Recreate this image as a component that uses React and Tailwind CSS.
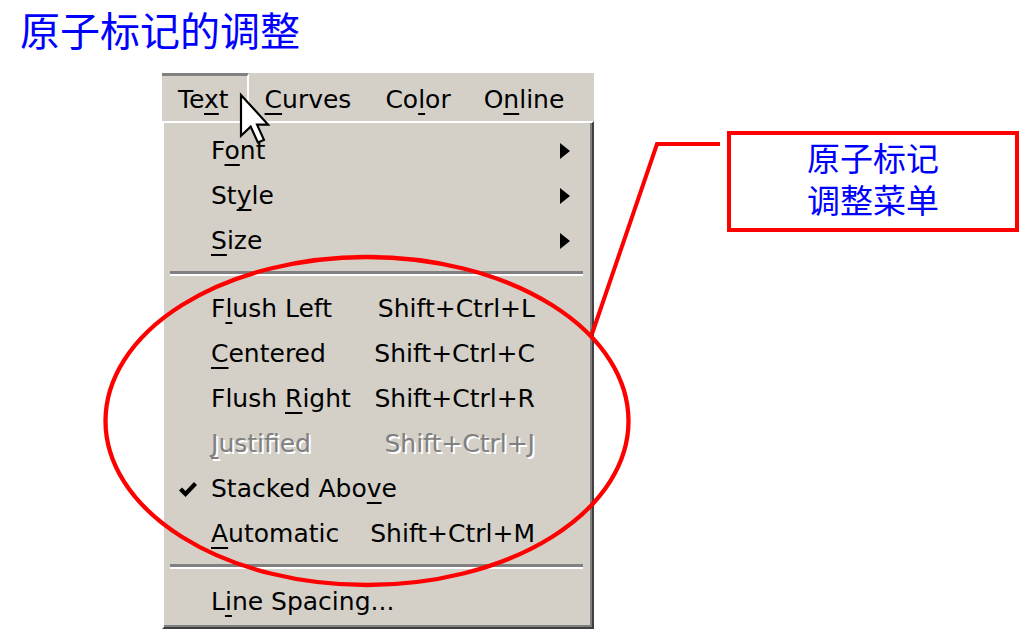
const menuFont = "font-['DejaVu_Sans',sans-serif]";

function U({ children }) {
  return <span className="underline decoration-2 underline-offset-[5px]">{children}</span>;
}

function Arrow() {
  return (
    <svg width="10" height="16" viewBox="0 0 10 16">
      <path d="M0 0 L10 8 L0 16 Z" fill="#000" />
    </svg>
  );
}

function Check() {
  return (
    <svg width="20" height="16" viewBox="0 0 20 16">
      <path d="M2.5 8 L7.5 13 L17.5 2.5" fill="none" stroke="#000" strokeWidth="4.2" />
    </svg>
  );
}

function Item({ label, shortcut, arrow, check, disabled }) {
  const tone = disabled ? "text-[#808080] [text-shadow:2px_2px_0_#ffffff]" : "text-black";
  return (
    <div className={`flex h-[45px] items-center leading-[45px] ${tone}`}>
      <div className="flex w-[47px] justify-center">{check && <Check />}</div>
      <div className="flex-1 whitespace-nowrap">{label}</div>
      {shortcut && <div className="whitespace-nowrap">{shortcut}</div>}
      <div className="flex w-[57px] pl-[25px]">{arrow && <Arrow />}</div>
    </div>
  );
}

function Separator() {
  return (
    <div className="h-[23px] pl-[6px] pr-[9px] pt-[8px]">
      <div className="h-[3px] bg-[#808080]" />
      <div className="h-[2px] bg-white" />
    </div>
  );
}

function TextMenu() {
  return (
    <div className={`ml-[162px] mt-[24px] w-[432px] text-[25px] ${menuFont}`}>
      <div className="flex h-[48px] bg-[#d4d0c8]">
        <div className="border-t-[3px] border-r-2 border-t-[#808080] border-r-white pl-4 pr-[18px] pt-[2px] leading-[43px]">
          Te<U>x</U>t
        </div>
        <div className="pl-4 pr-[18px] pt-[5px] leading-[43px]">
          <U>C</U>urves
        </div>
        <div className="pl-4 pr-[17px] pt-[5px] leading-[43px]">
          Co<U>l</U>or
        </div>
        <div className="px-4 pt-[5px] leading-[43px]">
          O<U>n</U>line
        </div>
      </div>
      <div className="border-2 border-t-white border-l-white border-r-[#404040] border-b-[#404040] bg-[#d4d0c8] pb-[3px] pt-[5px] shadow-[inset_-2px_-2px_0_#808080]">
        <Item label={<>F<U>o</U>nt</>} arrow />
        <Item label={<>St<U>y</U>le</>} arrow />
        <Item label={<><U>S</U>ize</>} arrow />
        <Separator />
        <Item label={<>F<U>l</U>ush Left</>} shortcut="Shift+Ctrl+L" />
        <Item label={<><U>C</U>entered</>} shortcut="Shift+Ctrl+C" />
        <Item label={<>Flush <U>R</U>ight</>} shortcut="Shift+Ctrl+R" />
        <Item label={<><U>J</U>ustified</>} shortcut="Shift+Ctrl+J" disabled />
        <Item label={<>Stacked Abo<U>v</U>e</>} check />
        <Item label={<><U>A</U>utomatic</>} shortcut="Shift+Ctrl+M" />
        <Separator />
        <Item label={<>L<U>i</U>ne Spacing...</>} />
      </div>
    </div>
  );
}

export default function App() {
  return (
    <div className="relative h-[643px] w-[1024px] overflow-hidden bg-white">
      <h1 className="pl-[20px] pt-[9px] text-[40px] font-normal leading-[40px] text-[#0000ff] font-['Noto_Sans_CJK_SC',sans-serif]">
        原子标记的调整
      </h1>
      <div className="flex items-start">
        <TextMenu />
        <div className="ml-[133px] mt-[82px] h-[101px] w-[292px] border-4 border-[#ff0000] pt-px text-center text-[33px] leading-[42px] text-[#0000ff] font-['Noto_Sans_CJK_SC',sans-serif]">
          <div>原子标记</div>
          <div>调整菜单</div>
        </div>
      </div>
      <svg className="pointer-events-none absolute left-0 top-0" width="1024" height="643" viewBox="0 0 1024 643">
        <ellipse cx="367" cy="421" rx="261.5" ry="164" fill="none" stroke="#ff0000" strokeWidth="4.3" />
        <polyline points="592,334 657,144 720,144" fill="none" stroke="#ff0000" strokeWidth="4" />
        <g transform="translate(241 95) scale(2.55)">
          <path
            d="M0 0 L0 16 L3.8 12.4 L6.6 18.6 L9 17.6 L6.3 11.6 L10.6 11.6 Z"
            fill="#ffffff"
            stroke="#000000"
            strokeWidth="0.85"
            strokeLinejoin="miter"
          />
        </g>
      </svg>
    </div>
  );
}
